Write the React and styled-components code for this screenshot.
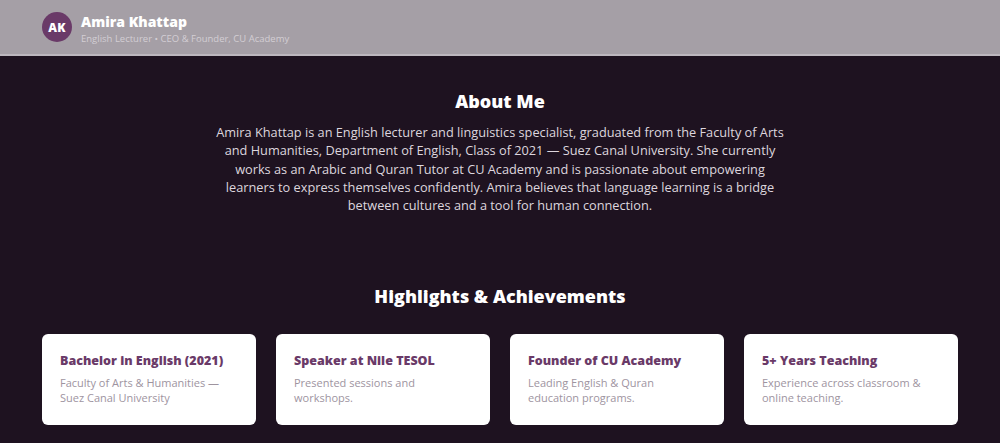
import React from "react";
import styled, { createGlobalStyle } from "styled-components";

const highlights = [
  {
    title: "Bachelor in English (2021)",
    text: "Faculty of Arts & Humanities — Suez Canal University",
  },
  { title: "Speaker at Nile TESOL", text: "Presented sessions and workshops." },
  {
    title: "Founder of CU Academy",
    text: "Leading English & Quran education programs.",
  },
  {
    title: "5+ Years Teaching",
    text: "Experience across classroom & online teaching.",
  },
];

const App = () => {
  return (
    <>
      <GlobalStyle />
      <Page>
        <Header>
          <Avatar>AK</Avatar>
          <Identity>
            <Name>Amira Khattap</Name>
            <Role>English Lecturer • CEO &amp; Founder, CU Academy</Role>
          </Identity>
        </Header>

        <Main>
          <Section>
            <SectionTitle>About Me</SectionTitle>
            <About>
              Amira Khattap is an English lecturer and linguistics specialist,
              graduated from the Faculty of Arts and Humanities, Department of
              English, Class of 2021 — Suez Canal University. She currently works
              as an Arabic and Quran Tutor at CU Academy and is passionate about
              empowering learners to express themselves confidently. Amira
              believes that language learning is a bridge between cultures and a
              tool for human connection.
            </About>
          </Section>

          <Section $gap={26}>
            <SectionTitle>Highlights &amp; Achievements</SectionTitle>
            <Grid>
              {highlights.map((h) => (
                <Card key={h.title}>
                  <CardTitle>{h.title}</CardTitle>
                  <CardText>{h.text}</CardText>
                </Card>
              ))}
            </Grid>
          </Section>
        </Main>
      </Page>
    </>
  );
};

const GlobalStyle = createGlobalStyle`
  html, body {
    margin: 0;
    padding: 0;
    background: #1e1220;
  }
  body {
    font-family: "Open Sans", "Noto Sans", sans-serif;
  }
  * {
    box-sizing: border-box;
  }
`;

const Page = styled.div`
  min-height: 443px;
  background: #1e1220;
  display: flex;
  flex-direction: column;
`;

const Header = styled.header`
  height: 56px;
  background: #a59fa6;
  border-bottom: 2px solid #bdb7be;
  display: flex;
  align-items: center;
  gap: 9px;
  padding: 0 42px;
`;

const Avatar = styled.div`
  width: 30px;
  height: 30px;
  border-radius: 50%;
  background: #6a3a68;
  color: #fff;
  display: flex;
  align-items: center;
  justify-content: center;
  font-size: 12px;
  font-weight: 800;
  letter-spacing: 0.2px;
`;

const Identity = styled.div`
  display: flex;
  flex-direction: column;
  gap: 1px;
  margin-top: 4px;
`;

const Name = styled.div`
  color: #fff;
  font-size: 14px;
  font-weight: 800;
  line-height: 18px;
`;

const Role = styled.div`
  color: #d3ced4;
  font-size: 9.5px;
  line-height: 13px;
`;

const Main = styled.main`
  display: flex;
  flex-direction: column;
  gap: 70px;
  padding: 33px 42px 0;
`;

const Section = styled.section`
  display: flex;
  flex-direction: column;
  align-items: center;
  gap: ${(p) => p.$gap || 10}px;
`;

const SectionTitle = styled.h2`
  margin: 0;
  color: #fff;
  font-size: 18px;
  font-weight: 800;
  line-height: 24px;
`;

const About = styled.p`
  margin: 0;
  max-width: 578px;
  color: #ddd6de;
  font-size: 12.75px;
  line-height: 18.3px;
  text-align: center;
`;

const Grid = styled.div`
  width: 100%;
  display: grid;
  grid-template-columns: repeat(4, 1fr);
  gap: 20px;
`;

const Card = styled.div`
  background: #fff;
  border-radius: 6px;
  height: 91px;
  padding: 18px 18px 0;
`;

const CardTitle = styled.h3`
  margin: 0 0 6px;
  color: #6a3a68;
  font-size: 12.5px;
  font-weight: 800;
  line-height: 17px;
`;

const CardText = styled.p`
  margin: 0;
  color: #9e949f;
  font-size: 11px;
  line-height: 15px;
`;

export default App;
